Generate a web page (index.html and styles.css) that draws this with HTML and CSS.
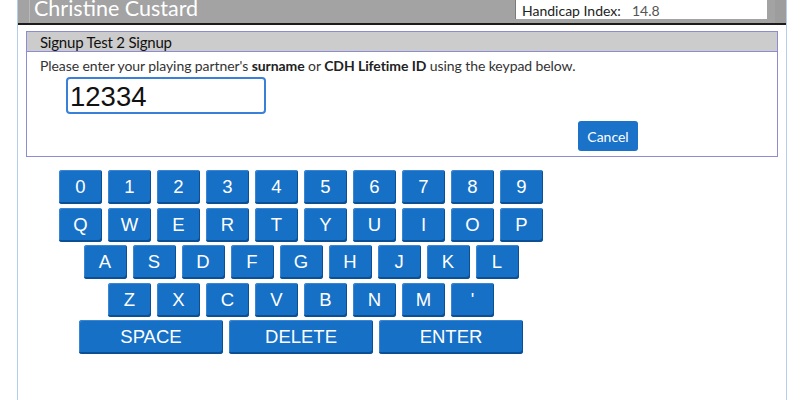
FILE: index.html
```html
<!DOCTYPE html>
<html lang="en">
  <head>
    <meta charset="UTF-8" />
    <meta name="viewport" content="width=device-width, initial-scale=1.0" />
    <title>Signup Test 2 Signup</title>
    <link rel="stylesheet" href="styles.css">
  </head>
  <body>
    <div class="page">
      <header class="top-bar">
        <div class="player-name">Christine Custard</div>
        <div class="handicap-box">
          <span class="handicap-label">Handicap Index:</span>
          <span class="handicap-value">14.8</span>
        </div>
        <div class="top-bar-end"></div>
      </header>

      <section class="signup-panel">
        <div class="signup-title">Signup Test 2 Signup</div>
        <div class="signup-body">
          <p class="signup-help">
            Please enter your playing partner's <b>surname</b> or
            <b>CDH Lifetime ID</b> using the keypad below.
          </p>
          <input class="partner-input" type="text" value="12334" />
          <div class="cancel-row">
            <button class="cancel-button">Cancel</button>
          </div>
        </div>
      </section>

      <div class="keypad">
        <div class="keypad-row">
          <button class="key">0</button>
          <button class="key">1</button>
          <button class="key">2</button>
          <button class="key">3</button>
          <button class="key">4</button>
          <button class="key">5</button>
          <button class="key">6</button>
          <button class="key">7</button>
          <button class="key">8</button>
          <button class="key">9</button>
        </div>
        <div class="keypad-row">
          <button class="key">Q</button>
          <button class="key">W</button>
          <button class="key">E</button>
          <button class="key">R</button>
          <button class="key">T</button>
          <button class="key">Y</button>
          <button class="key">U</button>
          <button class="key">I</button>
          <button class="key">O</button>
          <button class="key">P</button>
        </div>
        <div class="keypad-row">
          <button class="key">A</button>
          <button class="key">S</button>
          <button class="key">D</button>
          <button class="key">F</button>
          <button class="key">G</button>
          <button class="key">H</button>
          <button class="key">J</button>
          <button class="key">K</button>
          <button class="key">L</button>
        </div>
        <div class="keypad-row">
          <button class="key">Z</button>
          <button class="key">X</button>
          <button class="key">C</button>
          <button class="key">V</button>
          <button class="key">B</button>
          <button class="key">N</button>
          <button class="key">M</button>
          <button class="key">'</button>
        </div>
        <div class="keypad-row">
          <button class="key key-wide">SPACE</button>
          <button class="key key-wide">DELETE</button>
          <button class="key key-wide">ENTER</button>
        </div>
      </div>
    </div>
  </body>
</html>
```

FILE: styles.css
```css
:root {
  --page-edge: #b4cdec;
  --bar-grey: #a3a3a3;
  --panel-border: #8c8cd2;
  --panel-head: #cccccc;
  --key-blue: #1670c6;
  --key-shadow: #0c4f92;
  --text-dark: #222;
}
html,
body {
  margin: 0;
  padding: 0;
  background: #fff;
  font-family: "Lato", "Open Sans", sans-serif;
  color: var(--text-dark);
}

.page {
  margin-left: 17px;
  width: 768px;
  height: 400px;
  border-left: 1px solid var(--page-edge);
  border-right: 1px solid var(--page-edge);
  overflow: hidden;
}

/* top bar, cut off at the top like a scrolled page */
.top-bar {
  display: flex;
  height: 23px;
  background: var(--bar-grey);
  border-bottom: 2px solid #1c1c1c;
  overflow: hidden;
}
.player-name {
  flex: 1;
  margin-left: 11px;
  padding-left: 4px;
  border-left: 1px solid #b8b8b8;
  font-size: 21.5px;
  line-height: 21px;
  margin-top: -2px;
  color: #fff;
}
.handicap-box {
  display: flex;
  width: 245px;
  height: 19px;
  padding-left: 6px;
  background: #fff;
  border-left: 1px solid #7a7a7a;
  font-size: 14px;
  line-height: 21px;
  color: #222;
}
.handicap-label {
  width: 110px;
}
.handicap-value {
  color: #555;
}
.top-bar-end {
  width: 8px;
  border-right: 11px solid #9d9d9d;
}

.signup-panel {
  margin: 6px 8px 0 8px;
  border: 1px solid var(--panel-border);
}
.signup-title {
  height: 19px;
  padding-left: 13px;
  background: var(--panel-head);
  border-bottom: 1px solid var(--panel-border);
  font-size: 15px;
  line-height: 20px;
  color: #111;
  letter-spacing: -0.2px;
}
.signup-body {
  padding: 6px 13px 5px 13px;
}
.signup-help {
  margin: 0;
  font-size: 14px;
  line-height: 16px;
  letter-spacing: -0.08px;
  color: #333;
}
.signup-help b {
  font-weight: 700;
  color: #222;
}
.partner-input {
  display: block;
  box-sizing: border-box;
  width: 200px;
  height: 37px;
  margin: 3px 0 0 26px;
  padding: 2px 0 0 2px;
  border: 2px solid #3a80d8;
  border-radius: 4px;
  font-family: "Liberation Sans", Arial, sans-serif;
  font-size: 27.5px;
  color: #111;
  outline: none;
}
.cancel-row {
  display: flex;
  justify-content: flex-end;
  width: 598px;
  margin-top: 7px;
}
.cancel-button {
  width: 60px;
  height: 30px;
  border: none;
  border-radius: 3px;
  background: #1a72c9;
  color: #fff;
  font-family: "Lato", sans-serif;
  font-size: 14px;
  padding: 0;
}

/* keypad */
.keypad {
  width: 484px;
  margin: 13px 0 0 41px;
  display: flex;
  flex-direction: column;
  gap: 3.5px;
}
.keypad-row {
  display: flex;
  justify-content: center;
  gap: 6px;
}
.key {
  box-sizing: border-box;
  width: 43px;
  height: 34px;
  padding: 0;
  border: none;
  border-radius: 3px;
  background: var(--key-blue);
  box-shadow: inset -1px -2px 0 var(--key-shadow), inset 1px 1px 0 #3b86d2;
  color: #fff;
  font-family: "Liberation Sans", Arial, sans-serif;
  font-size: 18.5px;
  line-height: 32px;
}
.key-wide {
  width: 144px;
}
```
